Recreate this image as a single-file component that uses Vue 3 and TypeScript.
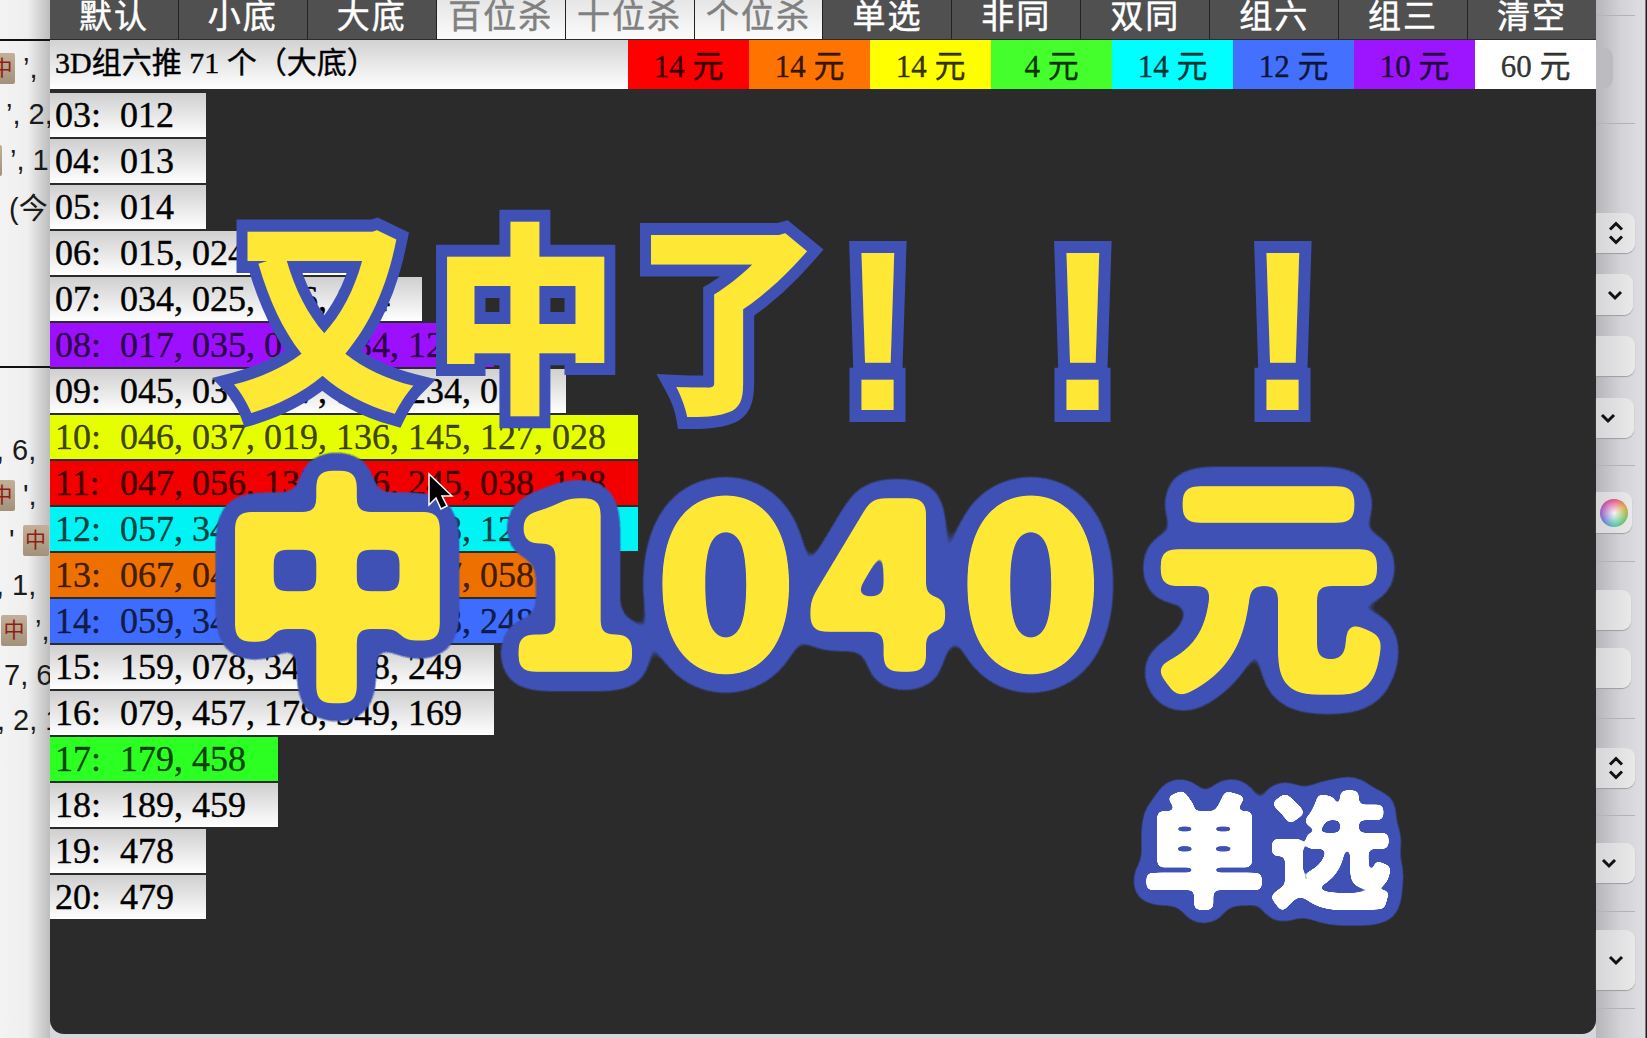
<template>
  <div class="page">
    <aside class="side">
      <div class="side-rule"></div>
      <div class="frag-group first">
        <div v-for="(f, i) in topFrags" :key="i" class="frag" :style="{ marginLeft: f.x + 'px' }">
          <template v-for="(p, j) in f.parts" :key="j">
            <span v-if="p === '#'" class="tile">中</span>
            <span v-else class="frag-text">{{ p }}</span>
          </template>
        </div>
      </div>
      <div class="side-rule second"></div>
      <div class="frag-group last">
        <div v-for="(f, i) in bottomFrags" :key="i" class="frag tight" :style="{ marginLeft: f.x + 'px' }">
          <template v-for="(p, j) in f.parts" :key="j">
            <span v-if="p === '#'" class="tile">中</span>
            <span v-else class="frag-text">{{ p }}</span>
          </template>
        </div>
      </div>
    </aside>

    <main class="window">
      <nav class="tabs">
        <button v-for="t in tabs" :key="t.label" class="tab" :class="{ lit: t.lit }">{{ t.label }}</button>
      </nav>
      <div class="summary">
        <div class="summary-title">3D组六推 71 个（大底）</div>
        <div v-for="c in prices" :key="c.color" class="price" :style="{ background: c.color }">
          {{ c.text }}
        </div>
      </div>
      <div class="rows">
        <div
          v-for="r in rows"
          :key="r.id"
          class="row"
          :class="{ tinted: r.color }"
          :style="{ width: 84 + r.nums.length * 72 + 'px', background: r.color }"
        >
          <span class="row-id">{{ r.id }}:</span>
          <span>{{ r.nums.join(', ') }}</span>
        </div>
      </div>
    </main>

    <aside class="tools">
      <div
        v-for="(it, i) in tools"
        :key="i"
        class="tool"
        :class="it.kind"
        :style="{ marginTop: it.gap + 'px', width: it.w + 'px', height: it.h + 'px' }"
      >
        <svg v-if="it.kind === 'stepper'" width="18" height="26" viewBox="0 0 18 26">
          <path d="M3 9.5 9 3.5l6 6M3 16.5l6 6 6-6" class="chev" />
        </svg>
        <svg v-if="it.kind === 'select' || it.kind === 'select-inner' || it.kind === 'select-tall'" width="18" height="12" viewBox="0 0 18 12">
          <path d="M3 3l6 6 6-6" class="chev" />
        </svg>
        <i v-if="it.kind === 'well'" class="wheel"></i>
      </div>
    </aside>

    <svg class="overlay" width="1647" height="1038" viewBox="0 0 1647 1038">
      <defs>
        <filter id="bubble-yellow" x="-25%" y="-25%" width="150%" height="150%" color-interpolation-filters="sRGB">
          <feGaussianBlur in="SourceAlpha" stdDeviation="7" result="soft" />
          <feComponentTransfer in="soft" result="core">
            <feFuncA type="linear" slope="20" intercept="-7.5" />
          </feComponentTransfer>
          <feGaussianBlur in="SourceAlpha" stdDeviation="15" result="wide" />
          <feComponentTransfer in="wide" result="rim">
            <feFuncA type="linear" slope="45" intercept="-2.6" />
          </feComponentTransfer>
          <feFlood flood-color="#3f51b5" />
          <feComposite in2="rim" operator="in" result="outline" />
          <feFlood flood-color="#ffe835" />
          <feComposite in2="core" operator="in" result="inner" />
          <feMerge>
            <feMergeNode in="outline" />
            <feMergeNode in="inner" />
          </feMerge>
        </filter>
        <filter id="bubble-white" x="-25%" y="-25%" width="150%" height="150%" color-interpolation-filters="sRGB">
          <feGaussianBlur in="SourceAlpha" stdDeviation="3" result="soft" />
          <feComponentTransfer in="soft" result="core">
            <feFuncA type="linear" slope="20" intercept="-9" />
          </feComponentTransfer>
          <feGaussianBlur in="SourceAlpha" stdDeviation="11" result="wide" />
          <feComponentTransfer in="wide" result="rim">
            <feFuncA type="linear" slope="45" intercept="-2.6" />
          </feComponentTransfer>
          <feFlood flood-color="#3f51b5" />
          <feComposite in2="rim" operator="in" result="outline" />
          <feFlood flood-color="#ffffff" />
          <feComposite in2="core" operator="in" result="inner" />
          <feMerge>
            <feMergeNode in="outline" />
            <feMergeNode in="inner" />
          </feMerge>
        </filter>
      </defs>
      <text transform="translate(229 397) scale(0.92 1)" class="headline">又中了</text>
      <text x="840 1045 1245" y="410" class="bang">!!!</text>
      <text x="217" y="678" class="bubble" font-size="240">中</text>
      <text x="502" y="670" class="bubble" font-size="234" letter-spacing="10">1040</text>
      <text x="1151" y="674" class="bubble" font-size="235">元</text>
      <text x="1141" y="898" class="tag" font-size="126">单选</text>
      <path d="M429 474v31l7-7 5 11 6-3-5-10h10z" class="cursor" />
    </svg>
  </div>
</template>

<script setup lang="ts">
interface Row {
  id: string
  nums: string[]
  color?: string
}

interface Tool {
  kind: string
  gap: number
  w: number
  h: number
}

const tabs = [
  { label: '默认' },
  { label: '小底' },
  { label: '大底' },
  { label: '百位杀', lit: true },
  { label: '十位杀', lit: true },
  { label: '个位杀', lit: true },
  { label: '单选' },
  { label: '非同' },
  { label: '双同' },
  { label: '组六' },
  { label: '组三' },
  { label: '清空' },
]

const prices = [
  { color: '#ff0000', text: '14 元' },
  { color: '#ff7400', text: '14 元' },
  { color: '#ffff00', text: '14 元' },
  { color: '#44ff2c', text: '4 元' },
  { color: '#00ffff', text: '14 元' },
  { color: '#4470ff', text: '12 元' },
  { color: '#9d14ff', text: '10 元' },
  { color: '#ffffff', text: '60 元' },
]

const rows: Row[] = [
  { id: '03', nums: ['012'] },
  { id: '04', nums: ['013'] },
  { id: '05', nums: ['014'] },
  { id: '06', nums: ['015', '024', '123'] },
  { id: '07', nums: ['034', '025', '016', '124'] },
  { id: '08', nums: ['017', '035', '026', '134', '125'], color: '#9d10ff' },
  { id: '09', nums: ['045', '036', '027', '135', '234', '018'] },
  { id: '10', nums: ['046', '037', '019', '136', '145', '127', '028'], color: '#e6ff00' },
  { id: '11', nums: ['047', '056', '137', '236', '245', '038', '128'], color: '#f20000' },
  { id: '12', nums: ['057', '345', '246', '156', '138', '129', '048'], color: '#00f4f4' },
  { id: '13', nums: ['067', '049', '139', '148', '157', '058'], color: '#ee7000' },
  { id: '14', nums: ['059', '347', '167', '149', '158', '248'], color: '#3d6cff' },
  { id: '15', nums: ['159', '078', '348', '168', '249'] },
  { id: '16', nums: ['079', '457', '178', '349', '169'] },
  { id: '17', nums: ['179', '458'], color: '#2cff22' },
  { id: '18', nums: ['189', '459'] },
  { id: '19', nums: ['478'] },
  { id: '20', nums: ['479'] },
]

const topFrags = [
  { x: -11, parts: ['#', '’,'] },
  { x: 6, parts: ['’, 2,'] },
  { x: -24, parts: ['#', '’, 1'] },
  { x: 9, parts: ['(今'] },
]

const bottomFrags = [
  { x: -4, parts: [', 6,'] },
  { x: -11, parts: ['#', '\','] },
  { x: 9, parts: ['\'', '#'] },
  { x: -4, parts: [', 1,'] },
  { x: 1, parts: ['#', '’,'] },
  { x: 4, parts: ['7, 6'] },
  { x: -3, parts: [', 2, 1'] },
]

const tools: Tool[] = [
  { kind: 'rule', gap: 15, w: 39, h: 1 },
  { kind: 'blank', gap: 31, w: 17, h: 42 },
  { kind: 'rule', gap: 34, w: 39, h: 1 },
  { kind: 'stepper', gap: 89, w: 39, h: 40 },
  { kind: 'select-inner', gap: 21, w: 37, h: 41 },
  { kind: 'field', gap: 21, w: 39, h: 40 },
  { kind: 'select', gap: 22, w: 38, h: 40 },
  { kind: 'rule', gap: 27, w: 39, h: 1 },
  { kind: 'well', gap: 26, w: 36, h: 41 },
  { kind: 'rule', gap: 28, w: 39, h: 1 },
  { kind: 'field', gap: 28, w: 35, h: 40 },
  { kind: 'field', gap: 18, w: 35, h: 40 },
  { kind: 'rule', gap: 30, w: 39, h: 1 },
  { kind: 'stepper', gap: 29, w: 39, h: 40 },
  { kind: 'rule', gap: 27, w: 39, h: 1 },
  { kind: 'select', gap: 27, w: 39, h: 40 },
  { kind: 'rule', gap: 28, w: 39, h: 1 },
  { kind: 'select-tall', gap: 18, w: 39, h: 60 },
  { kind: 'rule', gap: 18, w: 39, h: 1 },
]
</script>

<style scoped>
.page {
  position: relative;
  display: flex;
  width: 1647px;
  height: 1038px;
  overflow: hidden;
  background: #d8d8dc;
}

.side {
  flex: 0 0 50px;
  height: 100%;
  overflow: hidden;
  padding-top: 39px;
  box-sizing: border-box;
  background: linear-gradient(90deg, #f3f3f3 0, #efefef 55%, #bdbdbd 100%);
}

.side-rule {
  height: 2px;
  background: #111;
}

.side-rule.second {
  margin-top: 137px;
}

.frag-group.first {
  margin-top: 4px;
}

.frag-group.last {
  margin-top: 60px;
}

.frag {
  display: flex;
  align-items: center;
  gap: 8px;
  height: 46px;
  white-space: pre;
  width: 100px;
  font: 29px "Liberation Sans", "Noto Sans CJK SC", sans-serif;
  color: #1a1a1a;
}

.frag.tight {
  height: 45px;
}

.tile {
  flex: none;
  width: 26px;
  height: 31px;
  border-radius: 2px;
  background: linear-gradient(180deg, #c4b09a, #a3917c);
  color: #8c1f14;
  font-size: 21px;
  line-height: 30px;
  text-align: center;
}

.window {
  flex: 0 0 1546px;
  height: 1034px;
  background: #2b2b2b;
  border-radius: 0 0 14px 14px;
  overflow: hidden;
  font-family: "Liberation Serif", "Noto Sans CJK SC", serif;
}

.tabs {
  display: grid;
  grid-template-columns: repeat(12, 1fr);
  gap: 1px;
  height: 39px;
  background: #222;
}

.tab {
  padding: 0 0 4px;
  border: 0;
  font: 33px/33px "Liberation Serif", "Noto Sans CJK SC", serif;
  letter-spacing: 2px;
  -webkit-text-stroke: 0.5px currentColor;
  color: #fff;
  background: #505050;
  overflow: hidden;
}

.tab.lit {
  color: #808080;
  background: linear-gradient(180deg, #e6e6e6, #fbfbfb);
}

.summary {
  display: grid;
  grid-template-columns: 578px repeat(8, 1fr);
  grid-template-rows: 49px;
  height: 49px;
  margin-top: 1px;
}

.summary-title {
  padding-left: 5px;
  font-size: 30px;
  line-height: 45px;
  color: #000;
  -webkit-text-stroke: 0.4px #000;
  background: linear-gradient(180deg, #d2d2d2, #fff);
}

.price {
  font-size: 31px;
  line-height: 54px;
  text-align: center;
  color: rgba(0, 0, 0, 0.78);
  -webkit-text-stroke: 0.4px rgba(0, 0, 0, 0.78);
  overflow: hidden;
}

.rows {
  display: flex;
  flex-direction: column;
  gap: 2px;
  margin-top: 4px;
}

.row {
  display: flex;
  align-items: center;
  height: 44px;
  padding-left: 5px;
  box-sizing: border-box;
  white-space: pre;
  font-size: 36px;
  color: #000;
  -webkit-text-stroke: 0.4px #000;
  background: linear-gradient(180deg, #cfcfcf, #ffffff);
}

.row.tinted {
  color: rgba(0, 0, 0, 0.72);
  -webkit-text-stroke: 0.4px rgba(0, 0, 0, 0.72);
}

.row-id {
  flex: 0 0 65px;
}

.tools {
  flex: 1;
  height: 100%;
  background: linear-gradient(90deg, #b6b6ba 0, #d4d4d8 50%, #dfdfe3 96%, #222 98%);
}

.tool {
  box-sizing: border-box;
  display: flex;
  align-items: center;
  justify-content: center;
}

.tool.rule {
  background: #b4b4b8;
}

.tool.blank {
  border-radius: 0 10px 10px 0;
  background: #bcbcc0;
}

.tool.stepper,
.tool.select,
.tool.select-tall,
.tool.field,
.tool.well,
.tool.select-inner {
  border-radius: 0 9px 9px 0;
  background: linear-gradient(90deg, #d6d6d8, #e9e9ea);
  box-shadow: 0 1px 1px #9c9ca0;
}

.tool.select {
  justify-content: flex-end;
  padding-right: 17px;
}

.wheel {
  width: 28px;
  height: 28px;
  border-radius: 50%;
  background:
    radial-gradient(circle at 50% 50%, rgba(255, 255, 255, 0.9), rgba(255, 255, 255, 0) 70%),
    conic-gradient(#e0508a, #d8a040, #70c060, #50c0b0, #7070d0, #b050b0, #e0508a);
}

.chev {
  fill: none;
  stroke: #111;
  stroke-width: 3;
}

.overlay {
  position: absolute;
  inset: 0;
  pointer-events: none;
}

.headline {
  font-family: "Noto Sans CJK SC", sans-serif;
  font-size: 204px;
  font-weight: 900;
  letter-spacing: 16px;
  fill: #ffe835;
  stroke: #3f51b5;
  stroke-width: 24px;
  stroke-linejoin: miter;
  stroke-miterlimit: 6;
  paint-order: stroke fill;
}

.bang {
  font-family: "Liberation Sans", sans-serif;
  font-size: 228px;
  font-weight: 700;
  fill: #ffe835;
  stroke: #3f51b5;
  stroke-width: 24px;
  stroke-linejoin: miter;
  paint-order: stroke fill;
}

.bubble,
.tag {
  font-family: "Noto Sans CJK SC", sans-serif;
  font-weight: 900;
  fill: #ffe835;
}

.bubble {
  filter: url(#bubble-yellow);
}

.tag {
  filter: url(#bubble-white);
}

.cursor {
  fill: #000;
  stroke: #fff;
  stroke-width: 1.5;
}
</style>
